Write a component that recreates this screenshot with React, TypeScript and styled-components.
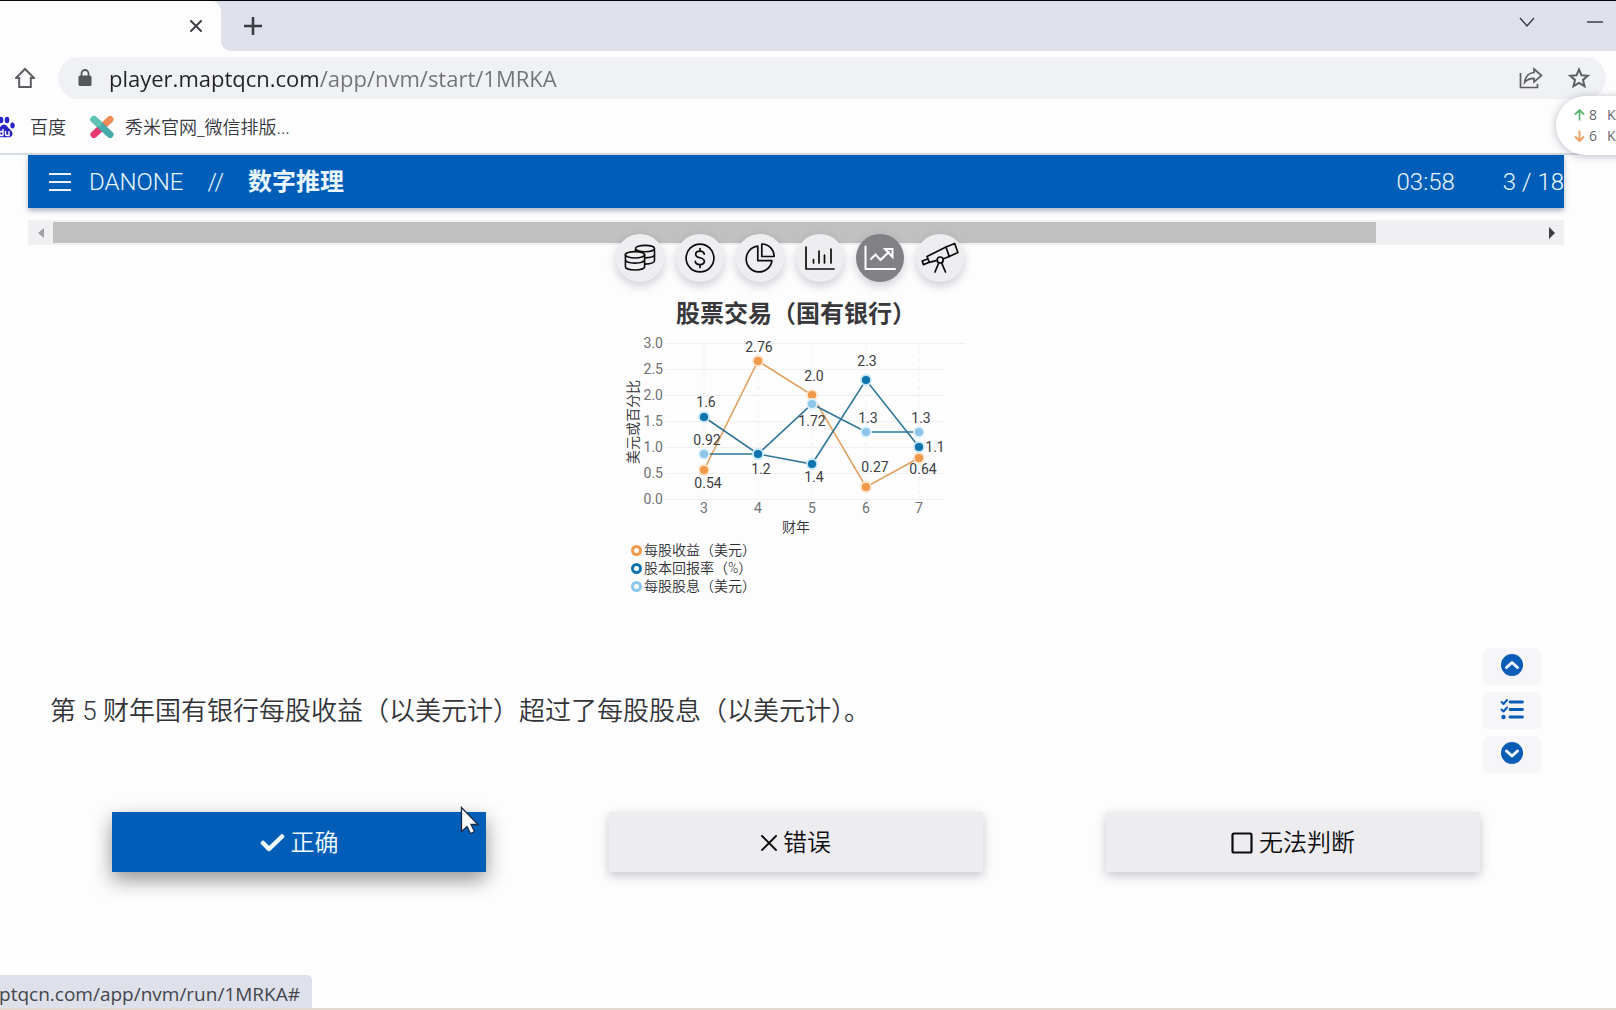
import React from "react";
import styled, { createGlobalStyle, css } from "styled-components";

const uiFont = `"Open Sans", "Noto Sans CJK SC", sans-serif`;
const pageFont = `Roboto, "Noto Sans CJK SC", sans-serif`;

const GlobalStyle = createGlobalStyle`
  *, *::before, *::after { box-sizing: border-box; }
  body { margin: 0; background: #fdfdfe; font-family: ${pageFont}; }
  button { font-family: inherit; border: 0; padding: 0; background: none; cursor: pointer; }
  svg { display: block; flex: none; }
`;

const Screen = styled.div`
  min-height: 100vh;
  display: flex;
  flex-direction: column;
  position: relative;
  overflow: hidden;
  border-top: 1px solid #05050d;
  border-bottom: 2px solid #e2d8cb;
`;

/* ---------- browser frame ---------- */

const TabStrip = styled.div`
  display: flex;
  height: 50px;
  background: #fdfdfe;
`;

const Tab = styled.div`
  width: 221px;
  display: flex;
  background: linear-gradient(#dee1ea, #dee1ea) top right / 10px 10px no-repeat;
`;

const TabFace = styled.div`
  flex: 1;
  display: flex;
  align-items: center;
  justify-content: flex-end;
  padding-right: 15px;
  border-radius: 0 10px 0 0;
  background: #fdfdfe;
`;

const StripRest = styled.div`
  flex: 1;
  display: flex;
  align-items: center;
  justify-content: space-between;
  padding-left: 22px;
  border-radius: 0 0 0 10px;
  background: #dee1ea;
`;

const IconButton = styled.button<{ $w?: number }>`
  display: flex;
  align-items: center;
  justify-content: center;
  width: ${(p) => p.$w ?? 20}px;
  height: 24px;
  color: #5c5e63;
`;

const WindowControls = styled.div`
  display: flex;
  gap: 52px;
  padding: 0 13px 8px 0;
`;

const Toolbar = styled.div`
  display: flex;
  align-items: center;
  gap: 22px;
  padding: 6px 10px 0 14px;
`;

const Omnibox = styled.div`
  flex: 1;
  display: flex;
  align-items: center;
  height: 42px;
  padding: 0 16px 0 20px;
  border-radius: 21px;
  background: #f0f1f5;
`;

const Address = styled.input`
  flex: 1;
  min-width: 0;
  height: 36px;
  margin-left: 17px;
  padding: 0;
  border: 0;
  outline: 0;
  font: 400 22px/36px ${uiFont};
  color: transparent;
  background: linear-gradient(90deg, #202226 209px, #717377 209px);
  -webkit-background-clip: text;
  background-clip: text;
`;

const OmniActions = styled.div`
  display: flex;
  gap: 25px;
`;

const Bookmarks = styled.nav`
  display: flex;
  align-items: center;
  gap: 24px;
  height: 56px;
  padding-top: 2px;
  border-bottom: 2px solid #d5dbe3;
`;

const Bookmark = styled.a`
  display: flex;
  align-items: center;
  gap: 11px;
  font: 400 18px/24px "Noto Sans", "Noto Sans CJK SC", sans-serif;
  font-weight: 350;
  color: #36383e;
  text-decoration: none;

  &:first-child {
    gap: 15px;
    margin-left: -7px;
  }
`;

const SpeedPill = styled.div`
  position: absolute;
  top: 95px;
  right: -40px;
  width: 100px;
  height: 59px;
  padding: 8px 0 0 18px;
  border-radius: 30px;
  background: #fff;
  box-shadow: 0 1px 8px rgba(60, 60, 80, 0.35);
`;

const SpeedRow = styled.div`
  display: flex;
  align-items: center;
  font: 400 14px/21px ${uiFont};
  color: #66686d;
  white-space: nowrap;
`;

const SpeedValue = styled.span`
  width: 18px;
  margin-left: 4px;
`;

const StatusBar = styled.div`
  position: absolute;
  left: 0;
  bottom: -2px;
  width: 312px;
  height: 35px;
  display: flex;
  justify-content: flex-end;
  overflow: hidden;
  padding-right: 12px;
  border-radius: 0 5px 0 0;
  background: #dee1ea;
  font: 400 19px/38px ${uiFont};
  color: #44464d;
  white-space: nowrap;
`;

/* ---------- test page ---------- */

const Page = styled.main`
  margin: 0 52px 0 28px;
  display: flex;
  flex-direction: column;
`;

const TitleBar = styled.header`
  display: flex;
  align-items: center;
  height: 53px;
  padding-left: 21px;
  background: #005eb8;
  box-shadow: 0 3px 5px rgba(0, 30, 60, 0.3);
  color: #eaf7ff;
  font-size: 24px;
  line-height: 32px;
  font-weight: 300;
`;

const MenuButton = styled.button`
  width: 22px;
  height: 24px;
  margin-right: 18px;
  color: #e4f5ff;
`;

const Slashes = styled.span`
  margin: 0 24px;
`;

const Section = styled.strong`
  flex: 1;
  font-weight: 700;
`;

const Clock = styled.time`
  margin-right: 48px;
`;

const ScrollBar = styled.div`
  display: flex;
  height: 25px;
  margin-top: 12px;
  background: #f0eff2;
`;

const ScrollArrow = styled.button<{ $dim?: boolean }>`
  display: flex;
  align-items: center;
  justify-content: center;
  width: 25px;
  color: ${(p) => (p.$dim ? "#a0a0a4" : "#3c3c40")};
`;

const ScrollTrack = styled.div`
  flex: 1;
  padding: 2px 0;
`;

const ScrollThumb = styled.div`
  width: 89%;
  height: 100%;
  background: #c0c0c1;
`;

const Exhibit = styled.section`
  align-self: center;
  width: 360px;
  margin-top: -11px;
`;

const SourceTabs = styled.div`
  display: flex;
  gap: 12px;
`;

const SourceTab = styled.button<{ $active?: boolean }>`
  display: flex;
  align-items: center;
  justify-content: center;
  width: 48px;
  height: 48px;
  border-radius: 50%;
  background: ${(p) => (p.$active ? "#808085" : "#eeeef0")};
  color: ${(p) => (p.$active ? "#ffffff" : "#0c0c0e")};
  box-shadow: 0 4px 10px rgba(40, 40, 70, 0.22);
`;

const ChartTitle = styled.h1`
  margin: 16px 0 0;
  font-size: 24px;
  line-height: 32px;
  font-weight: 700;
  text-align: center;
  white-space: nowrap;
  color: #38383b;
`;

const Plot = styled.svg`
  font: 400 14px ${pageFont};
  fill: #6f7073;
`;

const Legend = styled.ul`
  margin: 0;
  padding: 0 0 0 15px;
  list-style: none;
`;

const LegendItem = styled.li<{ $color: string }>`
  display: flex;
  align-items: center;
  gap: 2px;
  font-size: 14px;
  line-height: 18px;
  font-weight: 350;
  color: #2e2f33;

  &::before {
    content: "";
    width: 11px;
    height: 11px;
    border: 3px solid ${(p) => p.$color};
    border-radius: 50%;
  }
`;

const QuestionRow = styled.div`
  display: flex;
  align-items: center;
  justify-content: space-between;
  margin-top: 53px;
  padding: 0 23px 0 22px;
`;

const Question = styled.p`
  margin: 0;
  font-size: 26px;
  line-height: 36px;
  font-weight: 350;
  color: #333438;
`;

const Pager = styled.div`
  display: flex;
  flex-direction: column;
  gap: 7px;
`;

const PagerButton = styled.button`
  display: flex;
  align-items: center;
  justify-content: center;
  width: 58px;
  height: 37px;
  padding-bottom: 3px;
  border-radius: 6px;
  background: #f6f6f9;
  color: #0b5cb4;
`;

const Answers = styled.div`
  display: grid;
  grid-template-columns: repeat(3, 1fr);
  gap: 123px;
  margin: 39px 84px 0;
`;

const Answer = styled.button<{ $selected?: boolean }>`
  display: flex;
  align-items: center;
  justify-content: center;
  gap: 6px;
  height: 60px;
  padding-top: 2px;
  font-size: 24px;
  line-height: 32px;
  font-weight: 350;
  ${(p) =>
    p.$selected
      ? css`
          background: #005eb8;
          color: #f2fbff;
          box-shadow: 0 8px 20px rgba(0, 0, 0, 0.42);
        `
      : css`
          background: #ededef;
          color: #0c0c0e;
          box-shadow: 0 4px 10px rgba(30, 30, 50, 0.24);
        `}
`;

const Pointer = styled.svg`
  position: absolute;
  left: 460px;
  top: 805px;
`;

/* ---------- drawings ---------- */

const stroke = {
  fill: "none",
  stroke: "currentColor",
  strokeLinecap: "round" as const,
  strokeLinejoin: "round" as const,
};

const Coins = () => (
  <svg width="32" height="28" viewBox="0 0 32 28" {...stroke} strokeWidth="1.6">
    <ellipse cx="11" cy="10.8" rx="9.6" ry="3.2" />
    <path d="M1.400 10.800v11.900c0 1.900 4.300 3.300 9.600 3.300s9.600-1.400 9.600-3.300V10.800M1.400 15.800c0 1.900 4.300 3.300 9.600 3.300s9.600-1.400 9.600-3.300" />
    <path d="M11.500 7.200V4.600c0-1.800 4.200-3.200 9.500-3.200s9.500 1.400 9.500 3.200v12.200c0 1.800-4 3-9.500 3.300M30.500 4.600c0 1.800-4.300 3.200-9.500 3.200s-9.500-1.400-9.500-3.200M30.500 10.600c0 1.800-4 3.100-9.500 3.300" />
  </svg>
);

const Dollar = () => (
  <svg width="30" height="30" viewBox="0 0 30 30" {...stroke} strokeWidth="1.7">
    <circle cx="15" cy="15" r="13.900" />
    <path d="M19.200 11.200c-.3-1.900-1.900-3-4.300-3s-4.200 1.200-4.200 3.200c0 4.600 8.700 2 8.700 6.900 0 2.100-1.900 3.300-4.500 3.300s-4.400-1.200-4.600-3.200M15 5.500v2.700M15 21.800v2.700" />
  </svg>
);

const Pie = () => (
  <svg width="30" height="30" viewBox="0 0 30 30" {...stroke} strokeWidth="1.7">
    <path d="M12.800 3.200A12.900 12.900 0 1 0 26.900 17.600H12.800z" />
    <path d="M16.800 1v12.500h12.300C29.100 6.500 23.800 1.200 16.800 1z" />
  </svg>
);

const Bars = () => (
  <svg width="30" height="26" viewBox="0 0 30 26" {...stroke} strokeWidth="1.7">
    <path d="M1 2v22h28M8.500 14.500V18M14 6v12M19.500 10v8M26 4v14" />
  </svg>
);

const Trend = () => (
  <svg width="32" height="26" viewBox="0 0 32 26" {...stroke} strokeWidth="2">
    <path d="M1.500 1.500v22.500H31" />
    <path d="M7 14l4.500-4.500 5 5.500L24.800 7M21 4h7.500v8z" strokeLinejoin="miter" />
  </svg>
);

const Telescope = () => (
  <svg width="38" height="32" viewBox="0 0 38 32" {...stroke} strokeWidth="1.7">
    <path d="M25 5l8.700-3.500 3.200 9-8.700 4z" />
    <path d="M25 5L6 14.500l2.300 5.800 7.800-1.900M22.500 16.700l5.700-2.200M6.700 17L1.200 19l1.200 3.600 5.900-2.300" />
    <circle cx="19.200" cy="18" r="3" />
    <path d="M17.800 20.800L14 30M20.600 20.800L24.500 30" />
  </svg>
);

const ChevronCircle = ({ down }: { down?: boolean }) => (
  <svg width="22" height="22" viewBox="0 0 22 22">
    <circle cx="11" cy="11" r="11" fill="currentColor" />
    <path
      d={down ? "M5.500 9l5.500 5 5.500-5" : "M5.500 13.500L11 8.500l5.500 5"}
      fill="none"
      stroke="#f1faff"
      strokeWidth="3"
      strokeLinecap="round"
      strokeLinejoin="round"
    />
  </svg>
);

const Checklist = () => (
  <svg width="24" height="22" viewBox="0 0 24 22" {...stroke} strokeWidth="2">
    <path d="M10 4h12.500M10 11.500h12.500M10 19h12.500" strokeWidth="2.800" />
    <path d="M1.500 4l2 2L7 2M1.500 11.500l2 2 3.500-4" />
    <circle cx="3.500" cy="19" r="1.200" fill="currentColor" />
  </svg>
);

const Arrow = ({ color, down }: { color: string; down?: boolean }) => (
  <svg width="11" height="12" viewBox="0 0 11 12" fill="none" stroke={color} strokeWidth="1.800">
    <path d={down ? "M5.500 0.500v10M1 6.500l4.500 4.500L10 6.500" : "M5.500 11.500v-10M1 5.500L5.500 1 10 5.500"} />
  </svg>
);

const Baidu = () => (
  <svg width="22" height="22" viewBox="0 0 22 22" fill="#2a23c8">
    <ellipse cx="2.500" cy="9" rx="2.200" ry="3" />
    <ellipse cx="8" cy="4" rx="2.300" ry="3.200" />
    <ellipse cx="14" cy="4" rx="2.300" ry="3.200" />
    <ellipse cx="19.500" cy="9.500" rx="2.200" ry="3" />
    <path d="M11 8.500c-2.500 0-3.500 2.500-5 4s-4 2.800-3.500 5.500 2.500 3.500 4.500 3.300c1.500-.2 6.500-.2 8 0 2 .2 4.200-.8 4.500-3.300.3-2.700-2-4-3.500-5.500s-2.500-4-5-4z" />
    <path d="M10 13v6.500M10 15.500H8.500a2 2 0 0 0 0 4H10M12.500 15v3q0 1.500 1.500 1.500H16V15" fill="none" stroke="#fff" strokeWidth="1.400" />
  </svg>
);

const Xiumi = () => (
  <svg width="24" height="24" viewBox="0 0 24 24" fill="none" strokeLinecap="round" strokeWidth="7">
    <path d="M20 4.500L12 12" stroke="#ee8a55" />
    <path d="M12 12l-8 7.500" stroke="#e5386e" />
    <path d="M4 4.500l16 15" stroke="#45aaa8" />
    <path d="M4 4.500l4 3.700" stroke="#5fc4b4" />
  </svg>
);

/* ---------- chart ---------- */

const X = [88, 142, 196, 250, 303];
const yTicks = ["3.0", "2.5", "2.0", "1.5", "1.0", "0.5", "0.0"];

const series = [
  { name: "每股收益（美元）", color: "#f0994a", halo: "#fde3c8", line: "#dfa060", y: [140, 31, 65, 157, 128] },
  { name: "每股股息（美元）", color: "#8cc6e8", halo: "#dff1fb", line: "#2f7598", y: [124, 124, 74, 102, 102] },
  { name: "股本回报率（%）", color: "#0f74ab", halo: "#c4e6f8", line: "#2f7598", y: [87, 124, 134, 50, 117] },
];

const legend = [series[0], series[2], series[1]];

const labels: [string, number, number][] = [
  ["2.76", 143, 17], ["2.0", 198, 46], ["2.3", 251, 31], ["1.6", 90, 72],
  ["0.92", 91, 110], ["0.54", 92, 153], ["1.2", 145, 139], ["1.4", 198, 147],
  ["1.72", 196, 91], ["1.3", 252, 88], ["1.3", 305, 88], ["1.1", 319, 117],
  ["0.27", 259, 137], ["0.64", 307, 139],
];

const LineChart = () => (
  <Plot width="360" height="211" viewBox="0 0 360 211" role="img" aria-label="股票交易（国有银行）">
    {yTicks.map((t, i) => (
      <g key={t}>
        <path d={`M50 ${13.5 + i * 26}H${i === 0 ? 349 : 328}`} stroke="#f0f0f2" />
        <text x="47" y={18 + i * 26} textAnchor="end">{t}</text>
      </g>
    ))}
    {X.map((x, i) => (
      <g key={x}>
        <path d={`M${x} 14V170`} stroke="#f0f0f3" strokeDasharray="4 3" />
        <text x={x} y="183" textAnchor="middle">{i + 3}</text>
      </g>
    ))}
    {series.map((s) => (
      <polyline key={s.name} points={s.y.map((y, i) => `${X[i]},${y}`).join(" ")} fill="none" stroke={s.line} strokeWidth="1.600" />
    ))}
    {series.map((s) =>
      s.y.map((y, i) => (
        <circle key={s.name + i} cx={X[i]} cy={y} r="5" fill={s.color} stroke={s.halo} strokeWidth="1.800" />
      ))
    )}
    {labels.map(([t, x, y]) => (
      <text key={t + x} x={x} y={y + 5} textAnchor="middle" fill="#3c3d41">{t}</text>
    ))}
    <text x="180" y="202" textAnchor="middle" fill="#2e2f33" fontWeight="350">财年</text>
    <text transform="translate(22 92) rotate(-90)" textAnchor="middle" fill="#2e2f33" fontWeight="350">美元或百分比</text>
  </Plot>
);

export default function App() {
  return (
    <Screen>
      <GlobalStyle />
      <TabStrip>
        <Tab>
          <TabFace>
            <IconButton aria-label="关闭标签页">
              <svg width="12" height="12" viewBox="0 0 12 12" {...stroke} stroke="#3e4045" strokeWidth="2">
                <path d="M1 1l10 10M11 1L1 11" />
              </svg>
            </IconButton>
          </TabFace>
        </Tab>
        <StripRest>
          <IconButton aria-label="新标签页">
            <svg width="18" height="18" viewBox="0 0 18 18" stroke="#3a3c44" strokeWidth="2.600">
              <path d="M9 0v18M0 9h18" />
            </svg>
          </IconButton>
          <WindowControls>
            <IconButton $w={16} aria-label="搜索标签页">
              <svg width="16" height="10" viewBox="0 0 16 10" fill="none" stroke="#33353c" strokeWidth="1.300">
                <path d="M1 1l7 8 7-8" />
              </svg>
            </IconButton>
            <IconButton $w={16} aria-label="最小化">
              <svg width="16" height="2" viewBox="0 0 16 2">
                <path d="M0 1h16" stroke="#22242a" strokeWidth="1.300" />
              </svg>
            </IconButton>
          </WindowControls>
        </StripRest>
      </TabStrip>

      <Toolbar>
        <IconButton $w={22} aria-label="主页">
          <svg width="22" height="22" viewBox="0 0 22 22" fill="none" stroke="#5c5e63" strokeWidth="2">
            <path d="M1.500 11.500L11 2l9.500 9.500M1.200 11h4v9h11.600v-9h4" />
          </svg>
        </IconButton>
        <Omnibox>
          <svg width="14" height="18" viewBox="0 0 14 18">
            <rect x="0.500" y="6.500" width="13" height="10.500" rx="1.500" fill="#55575c" />
            <path d="M3.500 7V4.500a3.500 3.500 0 0 1 7 0V7" fill="none" stroke="#55575c" strokeWidth="1.800" />
          </svg>
          <Address aria-label="地址栏" defaultValue="player.maptqcn.com/app/nvm/start/1MRKA" spellCheck={false} />
          <OmniActions>
            <IconButton $w={24} aria-label="分享">
              <svg width="24" height="22" viewBox="0 0 24 22" fill="none" stroke="#5c5e63" strokeWidth="1.700">
                <path d="M1.500 6v14.500h17V17" />
                <path d="M15 2l7.500 6.500L15 15v-3.700c-4.500 0-7 1.200-9.300 4C6.500 9.500 9.500 6 15 5.500z" />
              </svg>
            </IconButton>
            <IconButton $w={22} aria-label="收藏">
              <svg width="22" height="22" viewBox="0 0 22 22" fill="none" stroke="#5c5e63" strokeWidth="2">
                <path d="M11 2.500l2.500 5.800 6.300.5-4.800 4.100 1.500 6.200L11 15.800l-5.500 3.300L7 12.900 2.200 8.800l6.300-.5z" />
              </svg>
            </IconButton>
          </OmniActions>
        </Omnibox>
      </Toolbar>

      <Bookmarks aria-label="书签栏">
        <Bookmark href="#baidu"><Baidu />百度</Bookmark>
        <Bookmark href="#xiumi"><Xiumi />秀米官网_微信排版...</Bookmark>
      </Bookmarks>

      <Page>
        <TitleBar>
          <MenuButton aria-label="菜单">
            <svg width="22" height="24" viewBox="0 0 22 24" stroke="currentColor" strokeWidth="2">
              <path d="M0 4h22M0 12h22M0 20h22" />
            </svg>
          </MenuButton>
          <span>DANONE</span>
          <Slashes>//</Slashes>
          <Section>数字推理</Section>
          <Clock>03:58</Clock>
          <span>3 / 18</span>
        </TitleBar>

        <ScrollBar>
          <ScrollArrow $dim aria-label="向左滚动">
            <svg width="6" height="10" viewBox="0 0 6 10" fill="currentColor"><path d="M6 0v10L0 5z" /></svg>
          </ScrollArrow>
          <ScrollTrack><ScrollThumb /></ScrollTrack>
          <ScrollArrow aria-label="向右滚动">
            <svg width="6" height="12" viewBox="0 0 6 12" fill="currentColor"><path d="M0 0v12l6-6z" /></svg>
          </ScrollArrow>
        </ScrollBar>

        <Exhibit>
          <SourceTabs>
            <SourceTab aria-label="硬币"><Coins /></SourceTab>
            <SourceTab aria-label="货币"><Dollar /></SourceTab>
            <SourceTab aria-label="饼图"><Pie /></SourceTab>
            <SourceTab aria-label="柱形图"><Bars /></SourceTab>
            <SourceTab $active aria-label="走势"><Trend /></SourceTab>
            <SourceTab aria-label="展望"><Telescope /></SourceTab>
          </SourceTabs>
          <ChartTitle>股票交易（国有银行）</ChartTitle>
          <LineChart />
          <Legend>
            {legend.map((s) => (
              <LegendItem key={s.name} $color={s.color}>{s.name}</LegendItem>
            ))}
          </Legend>
        </Exhibit>

        <QuestionRow>
          <Question>第 5 财年国有银行每股收益（以美元计）超过了每股股息（以美元计）。</Question>
          <Pager>
            <PagerButton aria-label="上一题"><ChevronCircle /></PagerButton>
            <PagerButton aria-label="题目列表"><Checklist /></PagerButton>
            <PagerButton aria-label="下一题"><ChevronCircle down /></PagerButton>
          </Pager>
        </QuestionRow>

        <Answers>
          <Answer $selected>
            <svg width="25" height="20" viewBox="0 0 25 20" {...stroke} strokeWidth="4.500">
              <path d="M3 10l6 6L22 3.500" />
            </svg>
            正确
          </Answer>
          <Answer>
            <svg width="16" height="16" viewBox="0 0 16 16" {...stroke} strokeWidth="1.900">
              <path d="M1 1l14 14M15 1L1 15" />
            </svg>
            错误
          </Answer>
          <Answer>
            <svg width="22" height="22" viewBox="0 0 22 22" {...stroke} strokeWidth="2.200">
              <rect x="1.500" y="1.500" width="19" height="19" rx="1.500" />
            </svg>
            无法判断
          </Answer>
        </Answers>
      </Page>

      <SpeedPill>
        <SpeedRow><Arrow color="#5cb870" /><SpeedValue>8</SpeedValue>K/s</SpeedRow>
        <SpeedRow><Arrow color="#ee9a5c" down /><SpeedValue>6</SpeedValue>K/s</SpeedRow>
      </SpeedPill>
      <StatusBar>player.maptqcn.com/app/nvm/run/1MRKA#</StatusBar>
      <Pointer width="20" height="30" viewBox="0 0 20 30">
        <path d="M1.500 1.500v24l5.500-5 3.500 7 4-2-3.500-7h7z" fill="#fff" stroke="#1d2a44" strokeWidth="1.300" />
      </Pointer>
    </Screen>
  );
}
